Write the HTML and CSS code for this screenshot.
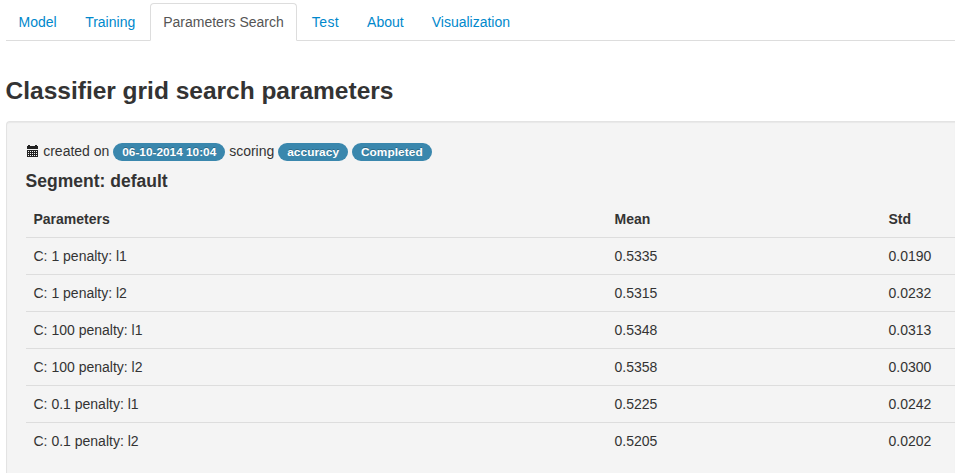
FILE: index.html
```html
<!DOCTYPE html>
<html lang="en">
<head>
<meta charset="utf-8">
<title>Classifier grid search parameters</title>
<link rel="stylesheet" href="styles.css">
</head>
<body>
<ul class="tabs">
<li class="first"><a>Model</a></li><li><a>Training</a></li><li class="active"><a>Parameters Search</a></li><li class="test"><a>Test</a></li><li><a>About</a></li><li><a>Visualization</a></li>
</ul>
<h3 class="title">Classifier grid search parameters</h3>
<div class="well">
<div class="meta"><svg class="icon" width="11" height="12" viewBox="0 0 11 12" shape-rendering="crispEdges"><path fill="#222" d="M1 0h2v1h5V0h2v1h1v3H0V1h1zM0 5h11v7H0z"/><path fill="#f5f5f5" d="M1 6h1v1H1zM3 6h1v1H3zM5 6h1v1H5zM7 6h1v1H7zM9 6h1v1H9zM1 8h1v1H1zM3 8h1v1H3zM5 8h1v1H5zM7 8h1v1H7zM9 8h1v1H9zM1 10h1v1H1zM3 10h1v1H3zM5 10h1v1H5zM7 10h1v1H7zM9 10h1v1H9z"/></svg> created on <span class="badge">06-10-2014 10:04</span> scoring <span class="badge">accuracy</span> <span class="badge">Completed</span></div>
<h4 class="segment">Segment: default</h4>
<table class="table">
<thead><tr><th class="params">Parameters</th><th class="mean">Mean</th><th>Std</th></tr></thead>
<tbody>
<tr><td>C: 1 penalty: l1</td><td>0.5335</td><td>0.0190</td></tr>
<tr><td>C: 1 penalty: l2</td><td>0.5315</td><td>0.0232</td></tr>
<tr><td>C: 100 penalty: l1</td><td>0.5348</td><td>0.0313</td></tr>
<tr><td>C: 100 penalty: l2</td><td>0.5358</td><td>0.0300</td></tr>
<tr><td>C: 0.1 penalty: l1</td><td>0.5225</td><td>0.0242</td></tr>
<tr><td>C: 0.1 penalty: l2</td><td>0.5205</td><td>0.0202</td></tr>
</tbody>
</table>
</div>
</body>
</html>
```
FILE: styles.css
```css
* { box-sizing: border-box; }
body { margin: 0; padding: 3px 0 0 6px; height: 473px; overflow: hidden; background: #fff; color: #333; font: 14px/20px "Liberation Sans", Arial, sans-serif; }
.tabs { display: flex; margin: 0; padding: 0; height: 38px; list-style: none; border-bottom: 1px solid #ddd; }
.tabs a { display: block; height: 38px; margin-right: 2px; padding: 8px 12px; border: 1px solid transparent; border-radius: 4px 4px 0 0; color: #08c; }
.tabs .first a { padding: 8px 12.5px 8px 11.5px; }
.tabs .active a { color: #555; background: #fff; border-color: #ddd #ddd #fff; }
.tabs .test a { letter-spacing: .4px; }
.title { margin: 30px 0 10px; font-size: 24.5px; line-height: 40px; letter-spacing: -.01px; text-indent: -.4px; }
.well { height: 352px; padding: 19px 0 0 19px; background: #f4f4f4; border: 1px solid #e3e3e3; border-width: 1px 0 0 1px; border-radius: 4px 0 0 0; box-shadow: inset 0 1px 1px rgba(0,0,0,.05); }
.meta { height: 20px; padding-left: 1px; white-space: nowrap; }
.icon { margin-right: 1.3px; vertical-align: -1px; }
.badge { display: inline-block; padding: 2px 9px; border-radius: 9px; background: #3a87ad; color: #fff; font-size: 11.844px; font-weight: bold; line-height: 14px; vertical-align: baseline; text-shadow: 0 -1px 0 rgba(0,0,0,.25); }
.badge + .badge { letter-spacing: .07px; }
.segment { margin: 10px 0; font-size: 17.5px; line-height: 20px; text-indent: -.4px; }
.table { width: 100%; border-collapse: collapse; table-layout: fixed; }
.table th, .table td { padding: 8px 0 8px 7.5px; text-align: left; line-height: 20px; border-top: 1px solid #ddd; }
.table th { border-top: 0; }
.params { width: 581px; }
.mean { width: 274px; }
```
